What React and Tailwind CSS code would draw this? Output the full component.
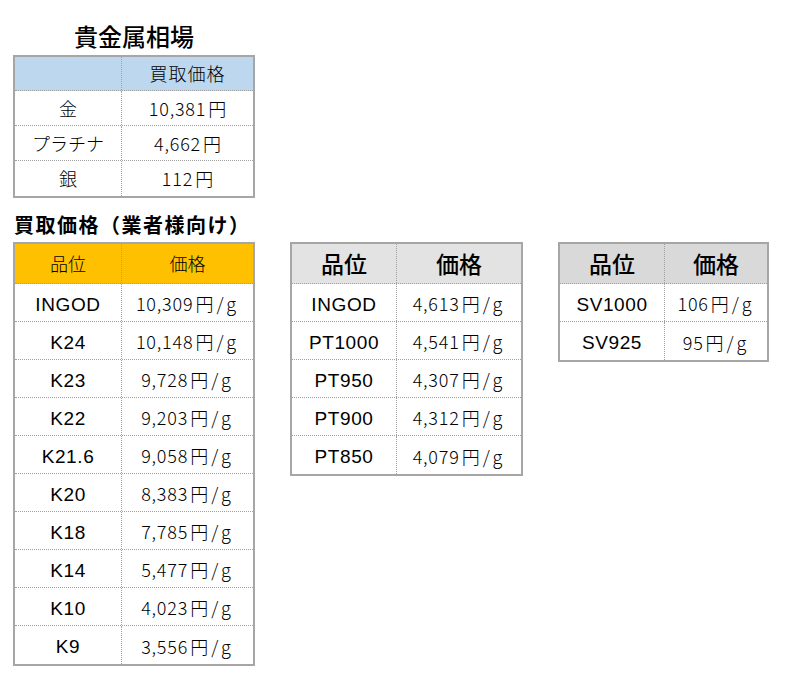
import React from "react";

const font = { fontFamily: '"Noto Sans CJK JP", "Liberation Sans", sans-serif' };
const latin = { fontFamily: '"Liberation Sans", "Noto Sans CJK JP", sans-serif' };

const market = [
    ["金", "10,381"],
    ["プラチナ", "4,662"],
    ["銀", "112"],
];

const gold = [
    ["INGOD", "10,309"],
    ["K24", "10,148"],
    ["K23", "9,728"],
    ["K22", "9,203"],
    ["K21.6", "9,058"],
    ["K20", "8,383"],
    ["K18", "7,785"],
    ["K14", "5,477"],
    ["K10", "4,023"],
    ["K9", "3,556"],
];

const platinum = [
    ["INGOD", "4,613"],
    ["PT1000", "4,541"],
    ["PT950", "4,307"],
    ["PT900", "4,312"],
    ["PT850", "4,079"],
];

const silver = [
    ["SV1000", "106"],
    ["SV925", "95"],
];

// thin half-width digits, then full-width yen sign
const Price = ({ value, unit }) => (
    <span className="flex items-baseline font-light text-[18px]">
        <span className="tracking-[0.8px]">{value}</span>
        <span className="ml-[2px]">円</span>
        {unit && <span className="ml-[3px] tracking-[3px]">/g</span>}
    </span>
);

const GradeTable = ({ rows, headClass, leftClass, rightClass, big }) => (
    <div className="border-2 border-[#a6a6a6] flex flex-col">
        <div className={`flex h-10 border-b border-dotted border-[#a0a0a0] ${headClass}`}>
            <div
                className={`${leftClass} flex items-center justify-center border-r border-dotted border-[#a0a0a0] ${
                    big ? "text-[23px] font-medium" : "text-[18px] font-light"
                }`}
            >
                品位
            </div>
            <div
                className={`${rightClass} flex items-center justify-center ${
                    big ? "text-[23px] font-medium" : "text-[18px] font-light"
                }`}
            >
                価格
            </div>
        </div>
        {rows.map((r, i) => (
            <div
                key={i}
                className={`flex h-[38px] ${
                    i < rows.length - 1 ? "border-b border-dotted border-[#a0a0a0]" : ""
                }`}
            >
                <div
                    className={`${leftClass} flex items-center justify-center pt-[5px] border-r border-dotted border-[#a0a0a0] text-[19px] tracking-[0.6px]`}
                    style={latin}
                >
                    {r[0]}
                </div>
                <div className={`${rightClass} flex items-center justify-center pt-[2px]`}>
                    <Price value={r[1]} unit />
                </div>
            </div>
        ))}
    </div>
);

const App = () => {
    return (
        <div className="w-[792px] h-[678px] bg-white text-black" style={font}>
            <div className="pl-[13px] pt-[22px] w-[255px] flex flex-col">
                <div className="text-center text-[24px] font-medium leading-7 h-[33px]">
                    貴金属相場
                </div>
                <div className="border-2 border-[#a6a6a6] flex flex-col">
                    <div className="flex h-[34px] bg-[#bdd7ee] border-b border-dotted border-[#a0a0a0]">
                        <div className="w-[107px] border-r border-dotted border-[#a0a0a0]"></div>
                        <div className="flex-1 flex items-center justify-center text-[18px] font-light tracking-[1px]">
                            買取価格
                        </div>
                    </div>
                    {market.map((r, i) => (
                        <div
                            key={i}
                            className={`flex h-[35px] ${
                                i < market.length - 1 ? "border-b border-dotted border-[#a0a0a0]" : ""
                            }`}
                        >
                            <div className="w-[107px] flex items-center justify-center border-r border-dotted border-[#a0a0a0] text-[18px] font-light">
                                {r[0]}
                            </div>
                            <div className="flex-1 flex items-center justify-center">
                                <Price value={r[1]} />
                            </div>
                        </div>
                    ))}
                </div>
            </div>
            <div className="pl-[14px] pt-[15px] text-[20px] font-bold leading-6 tracking-[1.5px]">
                買取価格（業者様向け）
            </div>
            <div className="flex items-start pl-[13px] pt-[5px]">
                <div className="w-[242px]">
                    <GradeTable
                        rows={gold}
                        headClass="bg-[#ffc000]"
                        leftClass="w-[107px]"
                        rightClass="flex-1"
                    />
                </div>
                <div className="w-[233px] ml-[35px]">
                    <GradeTable
                        rows={platinum}
                        headClass="bg-[#e3e3e3]"
                        leftClass="w-[105px]"
                        rightClass="flex-1"
                        big
                    />
                </div>
                <div className="w-[211px] ml-[35px]">
                    <GradeTable
                        rows={silver}
                        headClass="bg-[#d9d9d9]"
                        leftClass="w-[105px]"
                        rightClass="flex-1"
                        big
                    />
                </div>
            </div>
        </div>
    );
};

export default App;
